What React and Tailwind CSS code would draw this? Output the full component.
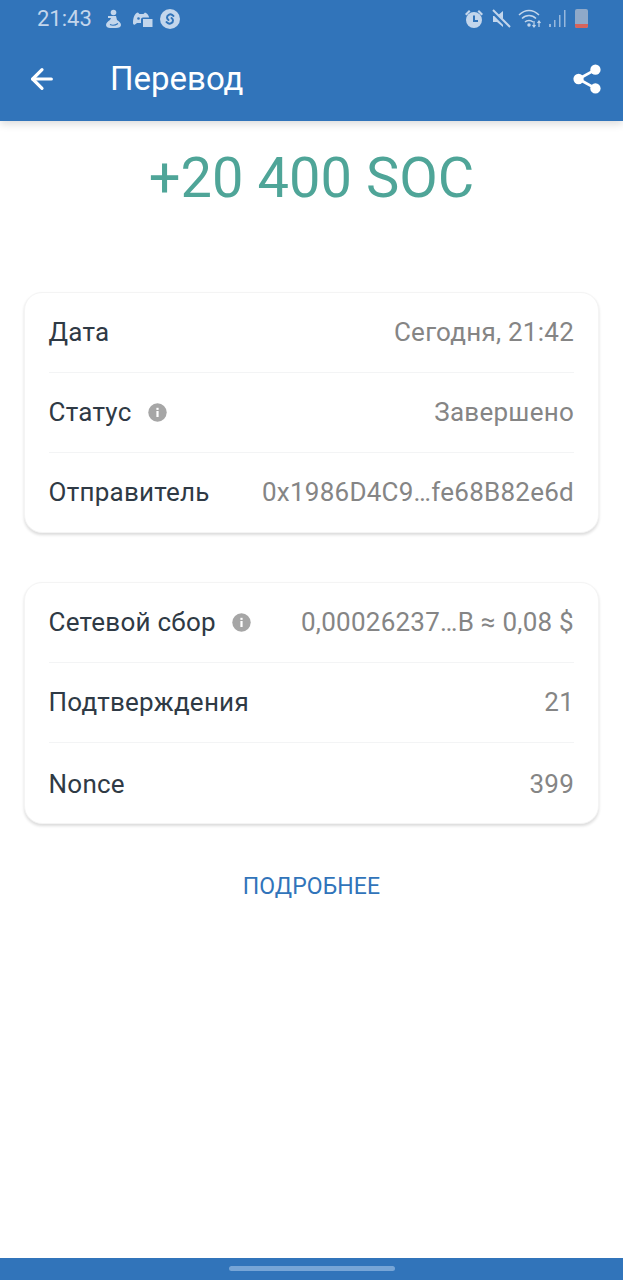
import React from 'react';
import { ArrowLeft } from 'lucide-react';

const Info = () => (
    <svg width="19" height="19" viewBox="0 0 19 19" className="shrink-0">
        <circle cx="9.5" cy="9.5" r="9.2" fill="#a6a6a6" />
        <rect x="8.4" y="8" width="2.2" height="6" fill="#fff" />
        <rect x="8.4" y="4.8" width="2.2" height="2.1" fill="#fff" />
    </svg>
);

const Row = ({ label, value, info, rowClass = 'h-20 border-b border-[#f3f4f5]' }) => (
    <div className={`flex items-center justify-between ${rowClass}`}>
        <div className="flex items-center shrink-0">
            <span className="text-[#2f3a45]">{label}</span>
            {info && <span className="ml-4"><Info /></span>}
        </div>
        <span className="text-[#858585] whitespace-nowrap">{value}</span>
    </div>
);

const Card = ({ children }) => (
    <div className="bg-white rounded-[18px] border border-[#f4f4f4] shadow-[0_2px_3px_rgba(0,0,0,0.14)] pl-[23.5px] pr-[24px] text-[26px] tracking-[0.25px]">
        {children}
    </div>
);

const StatusBar = () => (
    <div className="h-[37px] flex items-center justify-between pl-[37px] pr-[35px] text-[#c3d6ec]">
        <div className="flex items-center">
            <span className="text-[22px] mr-[12px]">21:43</span>
            {/* seated figure */}
            <svg width="20" height="20" viewBox="0 0 20 20" fill="currentColor" className="mr-[8px]">
                <circle cx="9.500" cy="3.500" r="2.800" />
                <path d="M7 7h5l1 4c2 1 4 3 4 5 0 2-2 3-5 3H6c-2 0-4-1-4-3 0-2 2-4 4-5l1-2H4V7z" />
                <path d="M6 15.500c2 1 5 1 8-1" fill="none" stroke="#3174ba" strokeWidth="1.200" />
            </svg>
            {/* game controller with chat box */}
            <svg width="21" height="18" viewBox="0 0 21 18" fill="currentColor" className="mr-[7px]">
                <path d="M1 13C1 7 3 3 6 2.500l1.500 1.500h4L13 2.500c2 .5 3.500 2.500 4.200 5H11c-1.500 0-2 1-2 2V13H5l-2 1.500c-1 .5-2 0-2-1.500z" />
                <circle cx="6.500" cy="8.500" r="1.300" fill="#3174ba" />
                <path d="M11 9h9.500v8H11z" />
            </svg>
            {/* shazam */}
            <svg width="20" height="20" viewBox="0 0 20 20">
                <circle cx="10" cy="10" r="10" fill="currentColor" />
                <path d="M13.500 7l-1.500-1.200c-2-1.300-5 .3-5 2.700 0 1.100.6 1.800 1.500 2.500M6.500 13l1.500 1.200c2 1.300 5-.3 5-2.700 0-1.100-.6-1.800-1.500-2.500" fill="none" stroke="#3174ba" strokeWidth="2" strokeLinecap="round" />
            </svg>
        </div>
        <div className="flex items-center">
            <svg width="20" height="20" viewBox="0 0 20 20" fill="currentColor" className="mr-[7px]">
                <circle cx="10" cy="11" r="8" />
                <path d="M1 5l4-4 1.500 1.500-4 4zM19 5l-4-4-1.500 1.500 4 4z" />
                <path d="M9 6.500h2V11h3v2H9z" fill="#3174ba" />
            </svg>
            <svg width="20" height="20" viewBox="0 0 20 20" fill="currentColor" className="mr-[7px]">
                <path d="M2 7h4l6-5v16l-6-5H2z" />
                <path d="M1 2l17 17" stroke="#3174ba" strokeWidth="4" />
                <path d="M2 1l17 17" stroke="currentColor" strokeWidth="2" />
            </svg>
            <svg width="25" height="20" viewBox="0 0 25 20" fill="none" stroke="currentColor" strokeWidth="1.500" className="mr-[5px]">
                <path d="M1 6c6-6 14-6 20 0" />
                <path d="M4 9.500c4-4 10-4 14 0" />
                <path d="M7 13c2-2 6-2 8 0" />
                <circle cx="11" cy="16" r="1" fill="currentColor" />
                <path d="M16 12v6M14.500 16l1.500 2 1.500-2M21 18v-6M19.500 14l1.500-2 1.500 2" strokeWidth="1.200" />
            </svg>
            <svg width="18" height="20" viewBox="0 0 18 20" fill="currentColor" className="mr-[9px] opacity-70">
                <rect x="1" y="15" width="2" height="3" />
                <rect x="6" y="11" width="1.500" height="7" />
                <rect x="11" y="6" width="1.500" height="12" />
                <rect x="16" y="1" width="1.500" height="17" />
            </svg>
            <div className="w-[13px] h-[19px] rounded-[2px] bg-[#8fa9c9] flex flex-col justify-end overflow-hidden">
                <div className="h-[4px] bg-[#d8645c]" />
            </div>
        </div>
    </div>
);

export default function App() {
    return (
        <div className="w-[623px] h-[1280px] flex flex-col bg-white overflow-hidden font-['Roboto',sans-serif]">
            {/* Header */}
            <div className="bg-[#3174ba] h-[121px] shrink-0 shadow-[0_3px_8px_rgba(0,0,0,0.14)] relative z-10">
                <StatusBar />
                <div className="h-[84px] flex items-center justify-between pl-[26px] pr-[21px] pb-[1px]">
                    <div className="flex items-center">
                        <ArrowLeft size={32} color="#fff" strokeWidth={2.4} />
                        <span className="ml-[52px] text-[33px] text-white">Перевод</span>
                    </div>
                    <svg width="30" height="32" viewBox="0 0 32 34" fill="#fff">
                        <circle cx="25" cy="7" r="5.500" />
                        <circle cx="25" cy="27" r="5.500" />
                        <circle cx="7" cy="17" r="5.500" />
                        <path d="M7 17L25 7M7 17l18 10" stroke="#fff" strokeWidth="3" />
                    </svg>
                </div>
            </div>

            {/* Content */}
            <div className="flex-1 flex flex-col">
                <div className="h-[171px] shrink-0 pt-[22px] text-center text-[56px] tracking-[0.05px] leading-[70px] text-[#4fa598]">
                    +20 400 SOC
                </div>
                <div className="px-[24px] flex flex-col gap-[49px]">
                    <Card>
                        <Row label="Дата" value="Сегодня, 21:42" />
                        <Row label="Статус" value="Завершено" info />
                        <Row label="Отправитель" value="0x1986D4C9…fe68B82e6d" rowClass="h-[79px]" />
                    </Card>
                    <Card>
                        <Row label="Сетевой сбор" value="0,00026237…B ≈ 0,08 $" info />
                        <Row label="Подтверждения" value="21" />
                        <Row label="Nonce" value="399" rowClass="h-20 pt-[2px]" />
                    </Card>
                </div>
                <div className="mt-[48px] text-center text-[23px] tracking-[0.1px] leading-[30px] text-[#3174ba]">ПОДРОБНЕЕ</div>
            </div>

            {/* Nav bar */}
            <div className="h-[22px] shrink-0 bg-[#3174ba] flex justify-center pt-[8px]">
                <div className="w-[166px] h-[5px] rounded-full bg-[#77a5d6]" />
            </div>
        </div>
    );
}
